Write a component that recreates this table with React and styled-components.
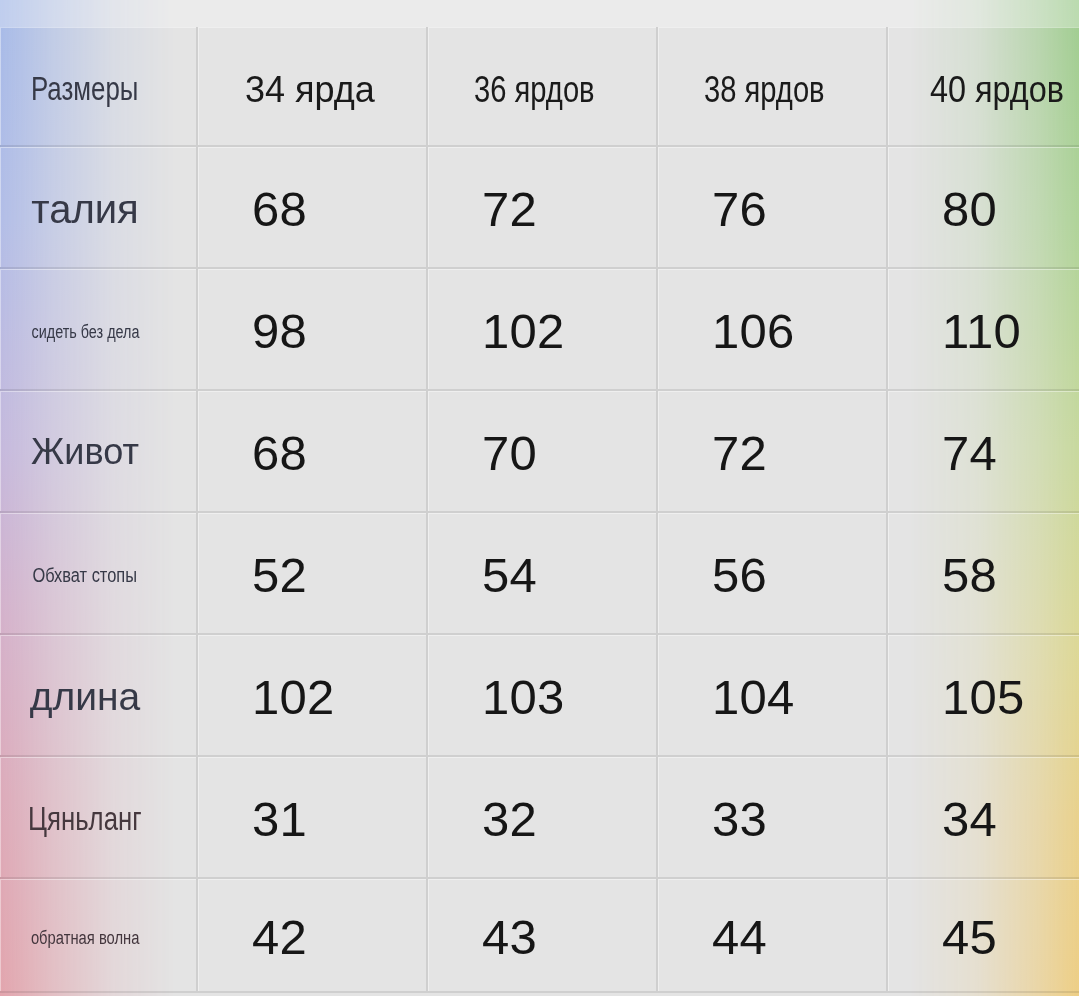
import React from "react";
import styled, { createGlobalStyle } from "styled-components";

const Global = createGlobalStyle`
  html, body {
    margin: 0;
    padding: 0;
    background: #e4e4e4;
    overflow: hidden;
  }
  body {
    font-family: "Liberation Sans", Arial, sans-serif;
  }
`;

const Page = styled.div`
  width: 100vw;
  height: 996px;
  overflow: hidden;
  display: flex;
  flex-direction: column;
`;

const Backdrop = styled.div`
  position: fixed;
  inset: 0;
  z-index: 0;
  pointer-events: none;

  &::before,
  &::after {
    content: "";
    position: absolute;
    top: 0;
    bottom: 0;
  }

  &::before {
    left: 0;
    width: 190px;
    background: linear-gradient(
      to bottom,
      #a3b8e8 0%,
      #afbbe7 22%,
      #c3b6dc 45%,
      #d3aec9 62%,
      #dca7b7 80%,
      #e2a1aa 100%
    );
    -webkit-mask-image: linear-gradient(to right, rgba(0,0,0,0.95) 0%, rgba(0,0,0,0.55) 28%, rgba(0,0,0,0.18) 60%, transparent 92%);
    mask-image: linear-gradient(to right, rgba(0,0,0,0.95) 0%, rgba(0,0,0,0.55) 28%, rgba(0,0,0,0.18) 60%, transparent 92%);
  }

  &::after {
    right: 0;
    width: 170px;
    background: linear-gradient(
      to bottom,
      #9ccb8c 0%,
      #acd295 22%,
      #c6d89a 45%,
      #dcd792 65%,
      #e9d088 82%,
      #eecd80 100%
    );
    -webkit-mask-image: linear-gradient(to left, rgba(0,0,0,0.95) 0%, rgba(0,0,0,0.6) 25%, rgba(0,0,0,0.2) 60%, transparent 100%);
    mask-image: linear-gradient(to left, rgba(0,0,0,0.95) 0%, rgba(0,0,0,0.6) 25%, rgba(0,0,0,0.2) 60%, transparent 100%);
  }
`;

const TopBand = styled.div`
  position: relative;
  z-index: 1;
  height: 27px;
  flex: none;
  background: rgba(255, 255, 255, 0.28);
`;

const Table = styled.div`
  position: relative;
  z-index: 1;
  display: grid;
  grid-template-columns: 198px repeat(4, 230px);
  grid-template-rows: 120px repeat(6, 122px) 114px;
  width: 1118px;
`;

const Cell = styled.div`
  display: flex;
  align-items: center;
  border-right: 2px solid rgba(0, 0, 0, 0.09);
  border-bottom: 2px solid rgba(0, 0, 0, 0.09);
  box-shadow: inset 1px 1px 0 rgba(255, 255, 255, 0.4);
  min-width: 0;
  overflow: visible;
`;

const LabelCell = styled(Cell)`
  justify-content: center;
  padding-right: 26px;
`;

const ValueCell = styled(Cell)`
  justify-content: flex-start;
  padding-left: ${(p) => p.$pad}px;
`;

const LabelText = styled.span`
  display: inline-block;
  white-space: nowrap;
  font-size: ${(p) => p.$size}px;
  color: ${(p) => p.$color || "#363947"};
  transform: scaleX(${(p) => p.$scale});
  transform-origin: center;
  line-height: 1;
  padding-top: ${(p) => p.$drop || 0}px;
`;

const HeadText = styled.span`
  display: inline-block;
  white-space: nowrap;
  font-size: 36px;
  color: #1a1a1a;
  transform: scaleX(${(p) => p.$scale});
  transform-origin: left center;
  line-height: 1;
  padding-top: 8px;
`;

const Value = styled.span`
  font-size: 49px;
  color: #161616;
  line-height: 1;
  padding-top: 4px;
  letter-spacing: 0.3px;
`;

const headers = [
  { text: "34 ярда", scale: 1, pad: 47 },
  { text: "36 ярдов", scale: 0.81, pad: 46 },
  { text: "38 ярдов", scale: 0.81, pad: 46 },
  { text: "40 ярдов", scale: 0.9, pad: 42 },
];

const rows = [
  { label: "талия", size: 40, scale: 1, drop: 4, values: [68, 72, 76, 80] },
  { label: "сидеть без дела", size: 18, scale: 0.8, drop: 6, values: [98, 102, 106, 110] },
  { label: "Живот", size: 36, scale: 1, drop: 2, values: [68, 70, 72, 74] },
  { label: "Обхват стопы", size: 20, scale: 0.82, drop: 4, values: [52, 54, 56, 58] },
  { label: "длина", size: 39, scale: 1, drop: 2, values: [102, 103, 104, 105] },
  { label: "Цяньланг", size: 33, scale: 0.78, color: "#45383e", drop: 2, values: [31, 32, 33, 34] },
  { label: "обратная волна", size: 18, scale: 0.82, color: "#43363d", drop: 6, values: [42, 43, 44, 45] },
];

export default function App() {
  return (
    <>
      <Global />
      <Backdrop />
      <Page>
        <TopBand />
        <Table>
          <LabelCell>
            <LabelText $size={34} $scale={0.76} $drop={4}>
              Размеры
            </LabelText>
          </LabelCell>
          {headers.map((h) => (
            <ValueCell key={h.text} $pad={h.pad}>
              <HeadText $scale={h.scale}>{h.text}</HeadText>
            </ValueCell>
          ))}
          {rows.map((r) => (
            <React.Fragment key={r.label}>
              <LabelCell>
                <LabelText $size={r.size} $scale={r.scale} $color={r.color} $drop={r.drop}>
                  {r.label}
                </LabelText>
              </LabelCell>
              {r.values.map((v, i) => (
                <ValueCell key={i} $pad={54}>
                  <Value>{v}</Value>
                </ValueCell>
              ))}
            </React.Fragment>
          ))}
        </Table>
      </Page>
    </>
  );
}
